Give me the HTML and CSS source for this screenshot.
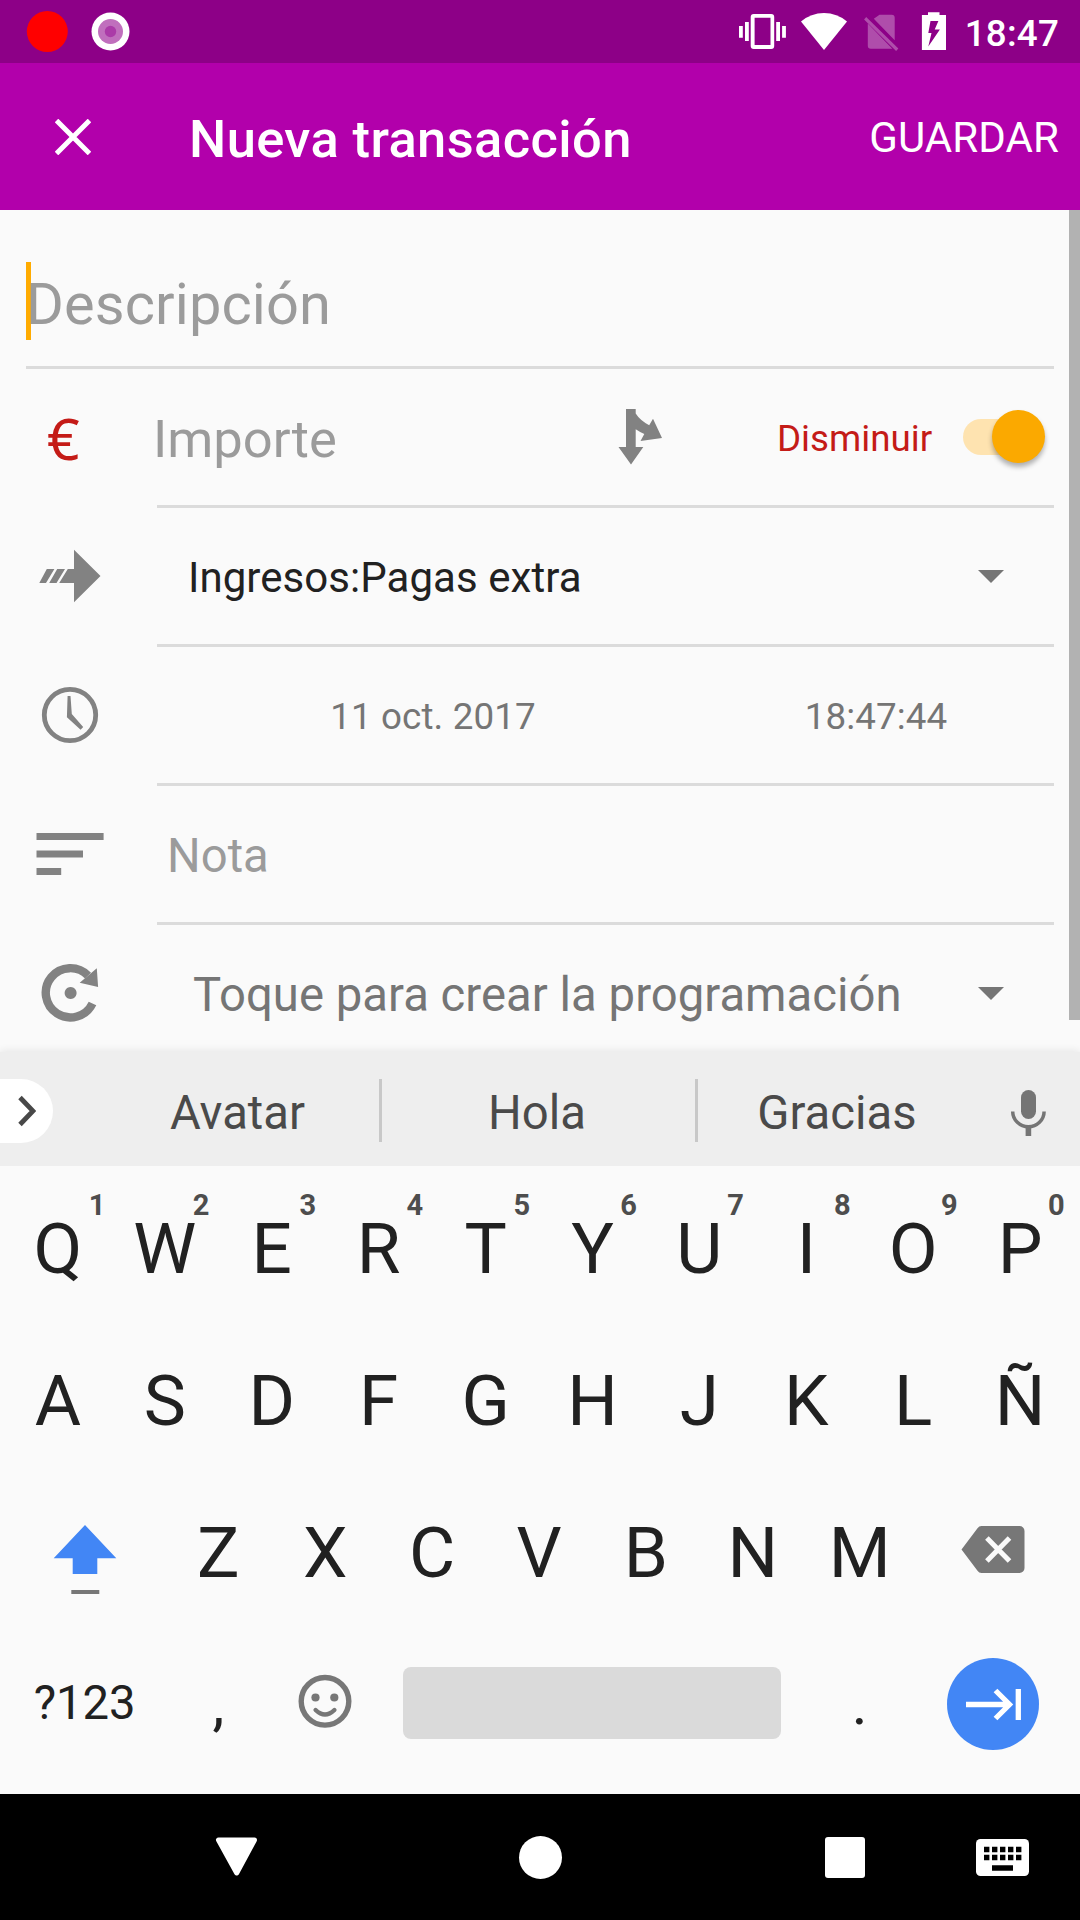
FILE: index.html
```html
<!DOCTYPE html>
<html lang="es">
<head>
<meta charset="utf-8">
<title>Nueva transacción</title>
<link rel="stylesheet" href="styles.css">
</head>
<body>
<div class="screen">
  <header class="status">
    <svg width="140" height="63" viewBox="0 0 140 63">
      <circle cx="47.3" cy="31.5" r="20.5" fill="#f00"/>
      <circle cx="110.5" cy="31.5" r="19" fill="#fff"/>
      <circle cx="110.5" cy="31.5" r="12.5" fill="#c06fbd"/>
      <circle cx="110.5" cy="31.5" r="5.7" fill="#ab3ba8"/>
    </svg>
    <div class="status-right">
      <svg width="216" height="63" viewBox="735 0 216 63" fill="#fff">
        <path fill-rule="evenodd" d="M753.7 14h17.5a3 3 0 0 1 3 3v29a3 3 0 0 1-3 3h-17.5a3 3 0 0 1-3-3v-29a3 3 0 0 1 3-3zM754.6 17.8v27.2h15.9v-27.2z"/>
        <path d="M745 22h3.8v19h-3.8zM739 26h3.8v11.7h-3.8zM776.2 22h3.8v19h-3.8zM782.1 26h3.8v11.7h-3.8z"/>
        <path d="M824 50L801 21.5Q811 13 824 13T847 21.5z"/>
        <g opacity=".3">
          <path d="M879.5 14.7h12.2a3 3 0 0 1 3 3v22.5L873.8 18.8zM867.8 23.5l24.5 25.2h-21.5a3 3 0 0 1-3-3z"/>
          <path d="M866.2 17l32.1 31.5-2.2 2.4-32-31.5z"/>
        </g>
        <path fill-rule="evenodd" d="M928 12.2h11.5v2.8h6.5v35h-24.1v-35h6.1zM930.5 21l-2.2 12h3.2l-3.2 13.5 11.6-17h-5.2l3.7-8.5z"/>
      </svg>
      <span class="clock">18:47</span>
    </div>
  </header>

  <div class="appbar">
    <svg width="36" height="36" viewBox="0 0 36 36"><path d="M1.5 1.5l33 33M34.5 1.5l-33 33" stroke="#fff" stroke-width="5"/></svg>
    <h1 class="title">Nueva transacción</h1>
    <span class="save">GUARDAR</span>
  </div>

  <main class="form">
    <div class="description"><span class="cursor"></span><span class="hint">Descripción</span></div>

    <div class="row">
      <div class="icon euro">€</div>
      <div class="field amount">
        <span class="hint amount-hint">Importe</span>
        <svg class="split" width="46" height="58" viewBox="617 408 46 58" fill="#828282"><path d="M626 409h9.7v4.5q4 6.500 13.500 11.800l3.800-6.600 9 19.300-21.500 3 3.800-7q-5.500-2.500-8.600-4.700v17.700h7.600l-12.300 17.500-12.500-17.500h7.500z"/></svg>
        <span class="sign">Disminuir</span>
        <span class="switch"><span class="thumb"></span></span>
      </div>
    </div>

    <div class="row">
      <svg class="icon" width="131" height="136" viewBox="26 508 131 136" fill="#828282"><path d="M39.300 583l7.500-14h7.600l-8.400 14zM49.200 583l8-14h7.800l-8.500 14zM59.200 583l8.600-14h6.200v-19.300l26.500 26.300-26.500 26.300v-19.300z"/></svg>
      <div class="field account"><span>Ingresos:Pagas extra</span><i class="caret"></i></div>
    </div>

    <div class="row">
      <svg class="icon" width="131" height="136" viewBox="26 647 131 136"><circle cx="70" cy="715" r="25.700" fill="none" stroke="#828282" stroke-width="4.800"/><path fill="#828282" d="M67.600 696h2.900l1.300 18 11.400 13-2.600 2.700-13.700-12.500z"/></svg>
      <div class="field when"><span class="date">11 oct. 2017</span><span class="time">18:47:44</span></div>
    </div>

    <div class="row">
      <svg class="icon" width="131" height="136" viewBox="26 786 131 136" fill="#828282"><path d="M36.500 833h67.100v7h-67.100zM36.500 850.500h46.500v7h-46.500zM36.500 868h24.700v7h-24.700z"/></svg>
      <div class="field note"><span class="hint">Nota</span></div>
    </div>

    <div class="row">
      <svg class="icon" width="131" height="127" viewBox="26 925 131 127"><path d="M92.500 1003.500A24.600 24.600 0 1 1 88 975.600" fill="none" stroke="#828282" stroke-width="8.400"/><path fill="#828282" d="M96.800 968.300l1.300 18.700-18.400-4.300zM70.600 987a6 6 0 1 0 .01 0z"/></svg>
      <div class="field schedule"><span>Toque para crear la programación</span><i class="caret"></i></div>
    </div>
    <div class="scrollbar"></div>
  </main>

  <section class="keyboard">
    <div class="strip">
      <div class="more"><svg width="18" height="32" viewBox="0 0 18 32"><path d="M2 2.500l13 13.500-13 13.500" fill="none" stroke="#484848" stroke-width="4.800"/></svg></div>
      <span class="word first">Avatar</span>
      <span class="word second">Hola</span>
      <span class="word last">Gracias</span>
      <svg class="mic" width="36" height="48" viewBox="1010 1089 36 48"><rect x="1021" y="1090" width="15" height="29" rx="7.500" fill="#757575"/><path d="M1012.700 1111.500a15.700 15.300 0 0 0 31.400 0" fill="none" stroke="#757575" stroke-width="3.500"/><path d="M1025.600 1127h5.600v9h-5.600z" fill="#757575"/></svg>
    </div>
    <div class="keys">
      <div class="line">
        <span class="key">Q<sup class="one">1</sup></span><span class="key">W<sup>2</sup></span><span class="key">E<sup>3</sup></span><span class="key">R<sup>4</sup></span><span class="key">T<sup>5</sup></span><span class="key">Y<sup>6</sup></span><span class="key">U<sup>7</sup></span><span class="key">I<sup>8</sup></span><span class="key">O<sup>9</sup></span><span class="key">P<sup>0</sup></span>
      </div>
      <div class="line">
        <span class="key">A</span><span class="key">S</span><span class="key">D</span><span class="key">F</span><span class="key">G</span><span class="key">H</span><span class="key">J</span><span class="key">K</span><span class="key">L</span><span class="key">Ñ</span>
      </div>
      <div class="line">
        <span class="key wide"><svg width="64" height="152" viewBox="52.700 1476 64 152"><path d="M84.700 1525l31.300 33.300h-19v15.700h-24.600v-15.700h-19z" fill="#4286f5"/><path d="M71 1590h28v4h-28z" fill="#777"/></svg></span>
        <span class="key">Z</span><span class="key">X</span><span class="key">C</span><span class="key">V</span><span class="key">B</span><span class="key">N</span><span class="key">M</span>
        <span class="key wide"><svg width="64" height="152" viewBox="962.500 1476 64 152"><path d="M983 1526h38a5 5 0 0 1 5 5v37a5 5 0 0 1-5 5h-38q-2.500 0-4-2.200l-16-21.300 16-21.300q1.500-2.200 4-2.200z" fill="#777"/><path d="M988.400 1538l22.600 23M1011 1538l-22.600 23" stroke="#fafafa" stroke-width="5"/></svg></span>
      </div>
      <div class="line">
        <span class="key wide symbols">?123</span>
        <span class="key punct">,</span>
        <span class="key"><svg width="54" height="152" viewBox="298.400 1628 54 152"><circle cx="325.400" cy="1701.300" r="23.800" fill="none" stroke="#777" stroke-width="5.400"/><circle cx="315.900" cy="1697.500" r="4.100" fill="#777"/><circle cx="334.700" cy="1697.500" r="4.100" fill="#777"/><path d="M316 1710q9.400 9 18.800 0" fill="none" stroke="#777" stroke-width="4.400" stroke-linecap="round"/></svg></span>
        <span class="space"><span class="space-bar"></span></span>
        <span class="key punct">.</span>
        <span class="key wide"><svg width="92" height="92" viewBox="948 1658 92 92"><circle cx="994" cy="1704" r="46" fill="#4286f5"/><path d="M967 1704.500h44M996.500 1690.500l14 14-14 14M1019.300 1689v31" fill="none" stroke="#fff" stroke-width="5.300"/></svg></span>
      </div>
    </div>
  </section>

  <nav class="nav">
    <svg class="back" width="44" height="40" viewBox="0 0 44 40"><path d="M3.500 3h36L21.700 36z" fill="#fff" stroke="#fff" stroke-width="5" stroke-linejoin="round"/></svg>
    <span class="home"></span>
    <span class="recent"></span>
    <svg class="ime" width="53" height="37" viewBox="0 0 53 37"><rect width="53" height="37" rx="4.500" fill="#fff"/><path d="M8 10.500h38M8 18.500h38" stroke="#000" stroke-width="5.300" stroke-dasharray="5.400 2.600"/><path d="M16 29h21" stroke="#000" stroke-width="5.500"/></svg>
  </nav>
</div>
</body>
</html>
```

FILE: styles.css
```css
* { box-sizing: border-box; }

body {
  margin: 0;
  font-family: Roboto, "Liberation Sans", sans-serif;
  background: #fafafa;
}

svg { display: block; flex: none; }

.screen {
  width: 1080px;
  height: 1920px;
  display: flex;
  flex-direction: column;
  overflow: hidden;
  background: #fafafa;
}

.status {
  height: 63px;
  flex: none;
  display: flex;
  justify-content: space-between;
  background: #8d0087;
}

.status-right {
  display: flex;
  align-items: center;
  padding-right: 21px;
}

.clock {
  margin-left: 14px;
  padding-top: 3px;
  font-size: 36.75px;
  letter-spacing: .2px;
  font-weight: 500;
  color: #fff;
}

.appbar {
  height: 147px;
  flex: none;
  display: flex;
  align-items: center;
  padding: 0 21px 0 55px;
  background: #b200ab;
  color: #fff;
}

.title {
  flex: 1;
  margin: 0;
  padding: 4px 0 0 98px;
  font-size: 52.5px;
  letter-spacing: .38px;
  font-weight: 500;
}

.save {
  padding-top: 2px;
  font-size: 42px;
  letter-spacing: .1px;
}

.form {
  position: relative;
  height: 842px;
  flex: none;
  padding: 0 26px;
}

.description {
  position: relative;
  height: 159px;
  padding-top: 32px;
  display: flex;
  align-items: center;
  border-bottom: 3px solid #dbdbdb;
  font-size: 57.75px;
  letter-spacing: .12px;
}

.cursor {
  position: absolute;
  left: 0;
  top: 52px;
  width: 5px;
  height: 78px;
  background: #ffab00;
}

.hint { position: relative; color: #9b9b9b; }

.row {
  height: 139px;
  display: flex;
}

.row:nth-of-type(6) { height: 127px; }

.icon { width: 131px; flex: none; }

.euro {
  padding: 3px 0 0 21px;
  line-height: 133px;
  font-family: "Noto Sans", sans-serif;
  font-size: 57px;
  color: #c41b17;
}

.field {
  flex: 1;
  display: flex;
  align-items: center;
  padding-top: 3px;
  border-bottom: 3px solid #dbdbdb;
  white-space: nowrap;
}

.amount-hint { width: 464px; margin-left: -4px; font-size: 52.5px; }

.split { margin-top: -3px; }

.sign {
  margin-left: 114px;
  font-size: 36.75px;
  color: #c41b17;
}

.switch {
  width: 74px;
  height: 36px;
  margin: -3px 17px 0 auto;
  position: relative;
  border-radius: 18px;
  background: #fee3b0;
}

.thumb {
  position: absolute;
  left: 29px;
  top: -9px;
  width: 53px;
  height: 53px;
  border-radius: 50%;
  background: #fba900;
  box-shadow: 0 4px 5px rgba(0, 0, 0, .3);
}

.account, .schedule {
  justify-content: space-between;
  padding-right: 50px;
}

.account { padding-left: 31px; font-size: 42px; letter-spacing: .05px; color: #212121; }

.schedule {
  padding-left: 36px;
  padding-top: 12px;
  border-bottom: 0;
  font-size: 47.25px;
  letter-spacing: .03px;
  color: #757575;
}

.caret {
  margin-top: -3px;
  border: 13px solid transparent;
  border-top-color: #757575;
  border-bottom: 0;
}

.when { font-size: 36.75px; letter-spacing: .12px; color: #757575; }
.date { width: 552px; text-align: center; }
.time { width: 334px; text-align: center; }

.note { padding-left: 10px; font-size: 47.25px; }

.scrollbar {
  position: absolute;
  right: 0;
  top: 0;
  width: 11px;
  height: 810px;
  background: #b2b2b2;
}

.keyboard {
  position: relative;
  height: 742px;
  flex: none;
  background: #fafafa;
  box-shadow: 0 -1px 8px rgba(0, 0, 0, .09);
}

.strip {
  height: 114px;
  display: flex;
  align-items: center;
  padding-top: 3px;
  background: #eee;
}

.more {
  width: 52.5px;
  height: 64px;
  display: flex;
  align-items: center;
  padding-left: 18px;
  margin-right: 43.5px;
  border-radius: 0 32px 32px 0;
  background: #fff;
}

.word {
  width: 316px;
  height: 63px;
  line-height: 68px;
  text-align: center;
  font-size: 47.25px;
  color: #4a4a4a;
  border-right: 3px solid #c8c8c8;
}

.first { width: 286px; }
.second { padding-right: 3px; }
.last { width: 278px; border-right: 0; }

.mic { margin: 4px 0 0 33.5px; }

.keys { padding: 6px 6.5px 0 4.5px; }

.line {
  height: 152px;
  display: flex;
}

.key {
  position: relative;
  flex: 2 0 0;
  display: flex;
  align-items: center;
  justify-content: center;
  font-size: 71px;
  line-height: 1;
  color: #212121;
}

.wide { flex-grow: 3; }

.key sup {
  position: absolute;
  right: 9px;
  top: 16px;
  font-size: 29px;
  line-height: 34px;
  font-weight: 700;
  color: #4d4d4d;
}

.key .one { right: 6px; }

.symbols { font-size: 47.25px; }
.punct { font-size: 60px; }

.space {
  flex: 8 0 0;
  display: flex;
  align-items: center;
  justify-content: center;
}

.space-bar {
  width: 378px;
  height: 72px;
  margin-top: -2px;
  border-radius: 8px;
  background: #dadada;
}

.nav {
  flex: 1;
  display: flex;
  align-items: center;
  padding-left: 214.5px;
  background: #000;
}

.home {
  width: 43px;
  height: 43px;
  margin-left: 260px;
  border-radius: 50%;
  background: #fff;
}

.recent {
  width: 40px;
  height: 41px;
  margin-left: 263px;
  border-radius: 3px;
  background: #fff;
}

.ime { margin-left: 111px; }
```
